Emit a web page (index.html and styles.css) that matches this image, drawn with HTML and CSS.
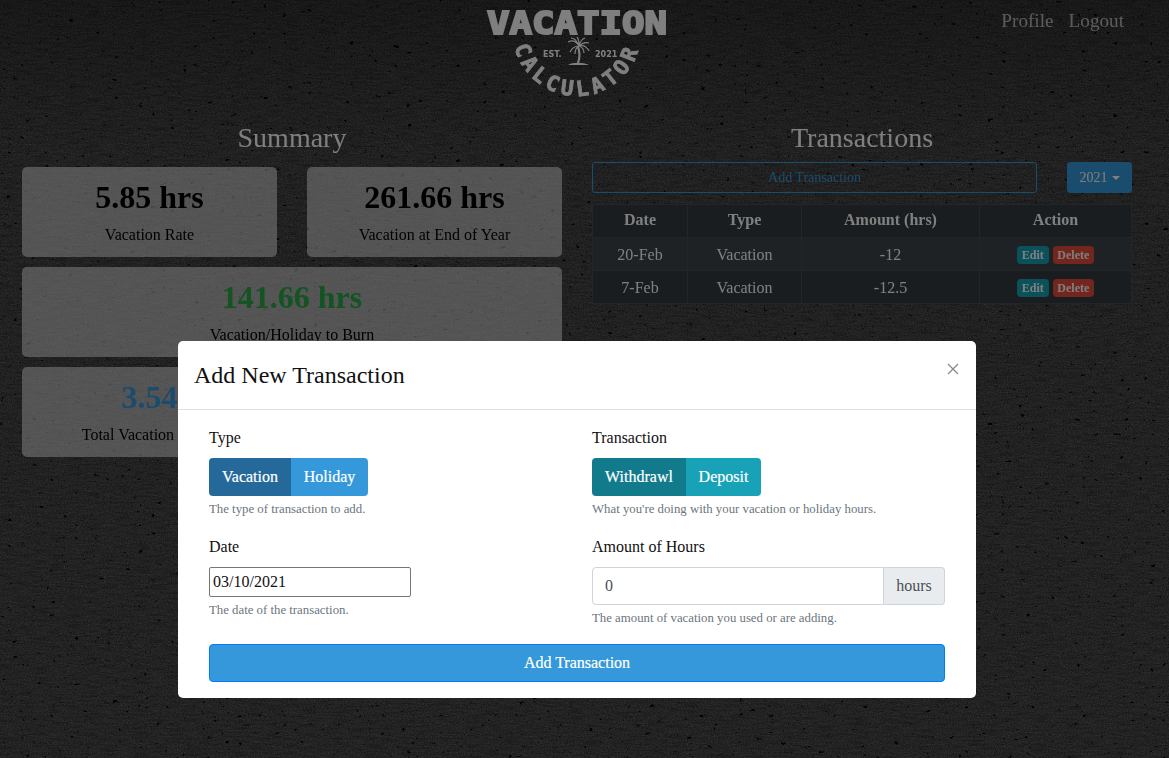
FILE: index.html
```html
<!DOCTYPE html>
<html lang="en">
<head>
    <meta charset="UTF-8">
    <meta name="viewport" content="width=device-width, initial-scale=1.0">
    <title>Vacation Calculator</title>
    <link rel="stylesheet" href="styles.css">
</head>
<body>
    <!-- paper texture behind the whole page -->
    <svg class="texture" aria-hidden="true">
        <defs>
            <linearGradient id="shade" x1="0" y1="0" x2="0" y2="1">
                <stop offset="0" stop-color="#000" stop-opacity="0.3"/>
                <stop offset="0.2" stop-color="#000" stop-opacity="0.05"/>
                <stop offset="1" stop-color="#000" stop-opacity="0"/>
            </linearGradient>
        </defs>
        <filter id="paper" x="0" y="0" width="100%" height="100%" color-interpolation-filters="sRGB">
            <feTurbulence type="fractalNoise" baseFrequency="0.7 0.9" numOctaves="2" seed="4" result="fine"/>
            <feColorMatrix in="fine" type="matrix" values="0.3 0 0 0 0.14  0.3 0 0 0 0.14  0.3 0 0 0 0.14  0 0 0 0 1" result="grain"/>
            <feTurbulence type="fractalNoise" baseFrequency="0.06 0.5" numOctaves="2" seed="7" result="streak"/>
            <feColorMatrix in="streak" type="matrix" values="0 0 0 0 0  0 0 0 0 0  0 0 0 0 0  0.6 0 0 0 -0.24" result="lines"/>
            <feTurbulence type="fractalNoise" baseFrequency="0.16 0.22" numOctaves="3" seed="11" result="coarse"/>
            <feColorMatrix in="coarse" type="matrix" values="0 0 0 0 0  0 0 0 0 0  0 0 0 0 0  9 0 0 0 -6.6" result="spots"/>
            <feMerge>
                <feMergeNode in="grain"/>
                <feMergeNode in="lines"/>
                <feMergeNode in="spots"/>
            </feMerge>
        </filter>
        <rect width="100%" height="100%" filter="url(#paper)"/>
        <rect width="100%" height="100%" fill="url(#shade)"/>
    </svg>

    <div class="page">
        <header class="top">
            <svg class="logo" viewBox="-10 0 200 110" role="img" aria-label="Vacation Calculator">
                <defs>
                    <path id="logoArc" d="M 26 32 A 64 64 0 0 0 154 32"/>
                </defs>
                <text class="logo-main" x="90" y="33.500" text-anchor="middle" textLength="180" lengthAdjust="spacingAndGlyphs">VACATION</text>
                <text class="logo-curve" text-anchor="middle"><textPath href="#logoArc" startOffset="50%">CALCULATOR</textPath></text>
                <text class="logo-small" x="56" y="57">EST.</text>
                <text class="logo-small" x="108" y="57">2021</text>
                <path class="palm-leaf" d="M92 46C89 41 85 40 81 42M92 46C90 41 88 38 84 38M92 46C92 42 92 39 90 37M92 46C93 42 95 39 98 38M92 46C95 43 98 42 102 43M92 46C96 45 100 47 102 51M92 46C95 47 97 50 97 53M92 46C88 46 85 48 83 52M92 46C90 47 88 50 88 54"/>
                <path class="palm-trunk" d="M91 47C93 52 93 57 91 63"/>
                <path class="palm-ground" d="M81 65C85 62 96 62 102 65z"/>
            </svg>
            <nav class="top-links">
                <a href="#">Profile</a>
                <a href="#">Logout</a>
            </nav>
        </header>

        <main class="columns">
            <section>
                <h3>Summary</h3>
                <div class="stats">
                    <div class="stat">
                        <h2>5.85 hrs</h2>
                        <p>Vacation Rate</p>
                    </div>
                    <div class="stat">
                        <h2>261.66 hrs</h2>
                        <p>Vacation at End of Year</p>
                    </div>
                    <div class="stat wide">
                        <h2 class="green">141.66 hrs</h2>
                        <p>Vacation/Holiday to Burn</p>
                    </div>
                    <div class="stat">
                        <h2 class="blue">3.54</h2>
                        <p>Total Vacation Hours</p>
                    </div>
                </div>
            </section>

            <section>
                <h3>Transactions</h3>
                <div class="tools">
                    <button class="btn-outline">Add Transaction</button>
                    <button class="btn-year">2021<span class="caret"></span></button>
                </div>
                <table class="history">
                    <thead>
                        <tr>
                            <th class="col-date">Date</th>
                            <th class="col-type">Type</th>
                            <th class="col-amount">Amount (hrs)</th>
                            <th class="col-action">Action</th>
                        </tr>
                    </thead>
                    <tbody>
                        <tr>
                            <td>20-Feb</td>
                            <td>Vacation</td>
                            <td>-12</td>
                            <td class="actions"><button class="mini teal">Edit</button><button class="mini red">Delete</button></td>
                        </tr>
                        <tr>
                            <td>7-Feb</td>
                            <td>Vacation</td>
                            <td>-12.5</td>
                            <td class="actions"><button class="mini teal">Edit</button><button class="mini red">Delete</button></td>
                        </tr>
                    </tbody>
                </table>
            </section>
        </main>
    </div>

    <div class="backdrop">
        <div class="modal">
            <div class="modal-header">
                <h5>Add New Transaction</h5>
                <button class="close" aria-label="Close">
                    <svg viewBox="0 0 12 12" width="12" height="12"><path d="M1 1l10 10M11 1L1 11"/></svg>
                </button>
            </div>
            <form class="modal-body">
                <div class="field">
                    <label>Type</label>
                    <div class="segments">
                        <span class="seg seg-vacation">Vacation</span><span class="seg seg-holiday">Holiday</span>
                    </div>
                    <small>The type of transaction to add.</small>
                </div>
                <div class="field">
                    <label>Transaction</label>
                    <div class="segments">
                        <span class="seg seg-withdraw">Withdrawl</span><span class="seg seg-deposit">Deposit</span>
                    </div>
                    <small>What you're doing with your vacation or holiday hours.</small>
                </div>
                <div class="field">
                    <label for="date">Date</label>
                    <input class="date-input" id="date" type="text" value="03/10/2021">
                    <small>The date of the transaction.</small>
                </div>
                <div class="field">
                    <label for="hours">Amount of Hours</label>
                    <div class="input-group">
                        <input id="hours" type="number" value="0">
                        <span class="addon">hours</span>
                    </div>
                    <small>The amount of vacation you used or are adding.</small>
                </div>
                <button type="button" class="btn-submit">Add Transaction</button>
            </form>
        </div>
    </div>
</body>
</html>
```

FILE: styles.css
```css
* {
    box-sizing: border-box;
}

html, body {
    height: 100%;
}

body {
    margin: 0;
    overflow: hidden;
    background-color: #484848;
    color: #fff;
    font-family: "Liberation Serif", "Times New Roman", serif;
    font-size: 16px;
    line-height: 1.5;
}

button {
    font-family: inherit;
    cursor: pointer;
}

.texture {
    position: fixed;
    top: 0;
    left: 0;
    width: 100%;
    height: 100%;
}

.page {
    position: relative;
    width: 1154px;
    padding: 0 22px;
}

/* header */
.top {
    position: relative;
    height: 121px;
}

.logo {
    display: block;
    width: 200px;
    height: 110px;
    margin: 0 auto;
}

.logo-main {
    fill: #fff;
    stroke: #fff;
    stroke-width: 2px;
    font-family: "DejaVu Sans Mono", monospace;
    font-weight: bold;
    font-size: 32px;
}

.logo-curve {
    fill: #fff;
    stroke: #fff;
    stroke-width: 0.8px;
    font-family: "DejaVu Sans Mono", monospace;
    font-weight: bold;
    font-size: 21px;
    letter-spacing: 4.5px;
}

.logo-small {
    fill: #fff;
    font-family: "DejaVu Sans", sans-serif;
    font-weight: bold;
    font-size: 8px;
}

.palm-leaf {
    fill: none;
    stroke: #fff;
    stroke-width: 1.2;
}

.palm-trunk {
    fill: none;
    stroke: #fff;
    stroke-width: 2.2;
}

.palm-ground {
    fill: #fff;
}

.top-links {
    position: absolute;
    top: 7px;
    right: 8px;
    display: flex;
    gap: 15px;
    font-size: 19.2px;
}

.top-links a {
    color: rgba(255, 255, 255, 0.65);
    text-decoration: none;
}

/* two columns */
.columns {
    display: grid;
    grid-template-columns: 540px 540px;
    gap: 30px;
}

h3 {
    margin: 0 0 7px;
    font-size: 28px;
    font-weight: 400;
    line-height: 1.2;
    text-align: center;
}

.stats {
    display: grid;
    grid-template-columns: 255px 255px;
    gap: 10px 30px;
    margin-top: 12px;
}

.stat {
    height: 90px;
    padding-top: 11px;
    border-radius: 5px;
    background-color: rgba(255, 255, 255, 0.55);
    color: #000;
    text-align: center;
}

.stat.wide {
    grid-column: span 2;
}

.stat h2 {
    margin: 0 0 7px;
    font-size: 32px;
    line-height: 1.2;
}

.stat p {
    margin: 0;
}

.green {
    color: #28a745;
}

.blue {
    color: #3498db;
}

/* transactions */
.tools {
    display: flex;
    gap: 30px;
    margin-bottom: 11px;
}

.btn-outline, .btn-year {
    height: 31px;
    padding: 4px 8px;
    border: 1px solid #3498db;
    border-radius: 3px;
    font-size: 14px;
    line-height: 1.5;
}

.btn-outline {
    flex: 1;
    background: transparent;
    color: #3498db;
}

.btn-year {
    width: 65px;
    background-color: #3498db;
    color: #fff;
}

.caret {
    display: inline-block;
    margin-left: 4px;
    vertical-align: 2px;
    border-top: 4px solid #fff;
    border-left: 4px solid transparent;
    border-right: 4px solid transparent;
}

.history {
    width: 539px;
    table-layout: fixed;
    border-collapse: collapse;
    background-color: #343a40;
    text-align: center;
}

.history th, .history td {
    height: 33px;
    padding: 5px 4px 3px;
    border: 1px solid #454d55;
    line-height: 24px;
}

.history th {
    padding: 3px 4px 5px;
}

.history td.actions {
    padding: 4px;
}

.history tbody tr:nth-child(odd) {
    background-color: rgba(255, 255, 255, 0.05);
}

.col-date { width: 95px; }
.col-type { width: 114px; }
.col-amount { width: 178px; }
.col-action { width: 152px; }

.mini {
    height: 18px;
    padding: 0 4.8px;
    border: 0;
    border-radius: 4px;
    color: #fff;
    font-size: 12px;
    font-weight: bold;
    line-height: 18px;
    vertical-align: middle;
}

.mini + .mini {
    margin-left: 4px;
}

.teal {
    background-color: #17a2b8;
}

.red {
    background-color: #e74c3c;
}

/* modal */
.backdrop {
    position: fixed;
    top: 0;
    left: 0;
    width: 100%;
    height: 100%;
    padding-right: 15px;
    background-color: rgba(0, 0, 0, 0.5);
}

.modal {
    width: 798px;
    margin: 341px auto 0;
    border-radius: 5px;
    background-color: #fff;
    color: #212529;
}

.modal-header {
    display: flex;
    justify-content: space-between;
    height: 69px;
    padding: 16px;
    border-bottom: 1px solid #dee2e6;
}

.modal-header h5 {
    margin: 0;
    color: #111;
    font-size: 24px;
    font-weight: 400;
    line-height: 36px;
}

.close {
    align-self: flex-start;
    height: 12px;
    margin: 6px 1px 0 0;
    padding: 0;
    border: 0;
    background: none;
}

.close svg {
    display: block;
    fill: none;
    stroke: #8a8a8a;
    stroke-width: 1.3;
}

.modal-body {
    display: grid;
    grid-template-columns: 353px 353px;
    gap: 16px 30px;
    padding: 16px 31px;
}

.field label {
    display: block;
    margin-bottom: 8px;
    color: #111;
}

.field small {
    display: block;
    margin-top: 4px;
    color: #6c757d;
    font-size: 12.8px;
}

.segments {
    display: flex;
    height: 38px;
    border-radius: 4px;
    overflow: hidden;
    width: max-content;
    color: #fff;
}

.seg {
    padding: 7px 0;
    text-align: center;
    -webkit-text-stroke: 0.2px #fff;
}

.seg-vacation { width: 82px; background-color: #25699a; }
.seg-holiday { width: 77px; background-color: #3498db; }
.seg-withdraw { width: 94px; background-color: #117a8b; }
.seg-deposit { width: 75px; background-color: #17a2b8; }

.date-input {
    display: block;
    width: 202px;
    height: 30px;
    padding: 1px 3px;
    border: 1px solid #767676;
    border-radius: 2px;
    color: #111;
    font: inherit;
}

.input-group {
    display: flex;
    height: 38px;
}

.input-group input {
    flex: 1;
    min-width: 0;
    padding: 6px 12px;
    border: 1px solid #ced4da;
    border-radius: 4px 0 0 4px;
    color: #495057;
    font: inherit;
    appearance: textfield;
}

.addon {
    width: 61px;
    padding: 6px 0;
    border: 1px solid #ced4da;
    border-left: 0;
    border-radius: 0 4px 4px 0;
    background-color: #e9ecef;
    color: #495057;
    text-align: center;
}

.btn-submit {
    grid-column: span 2;
    height: 38px;
    border: 1px solid #007bff;
    border-radius: 4px;
    background-color: #3498db;
    color: #fff;
    font-size: 16px;
    -webkit-text-stroke: 0.2px #fff;
}
```
